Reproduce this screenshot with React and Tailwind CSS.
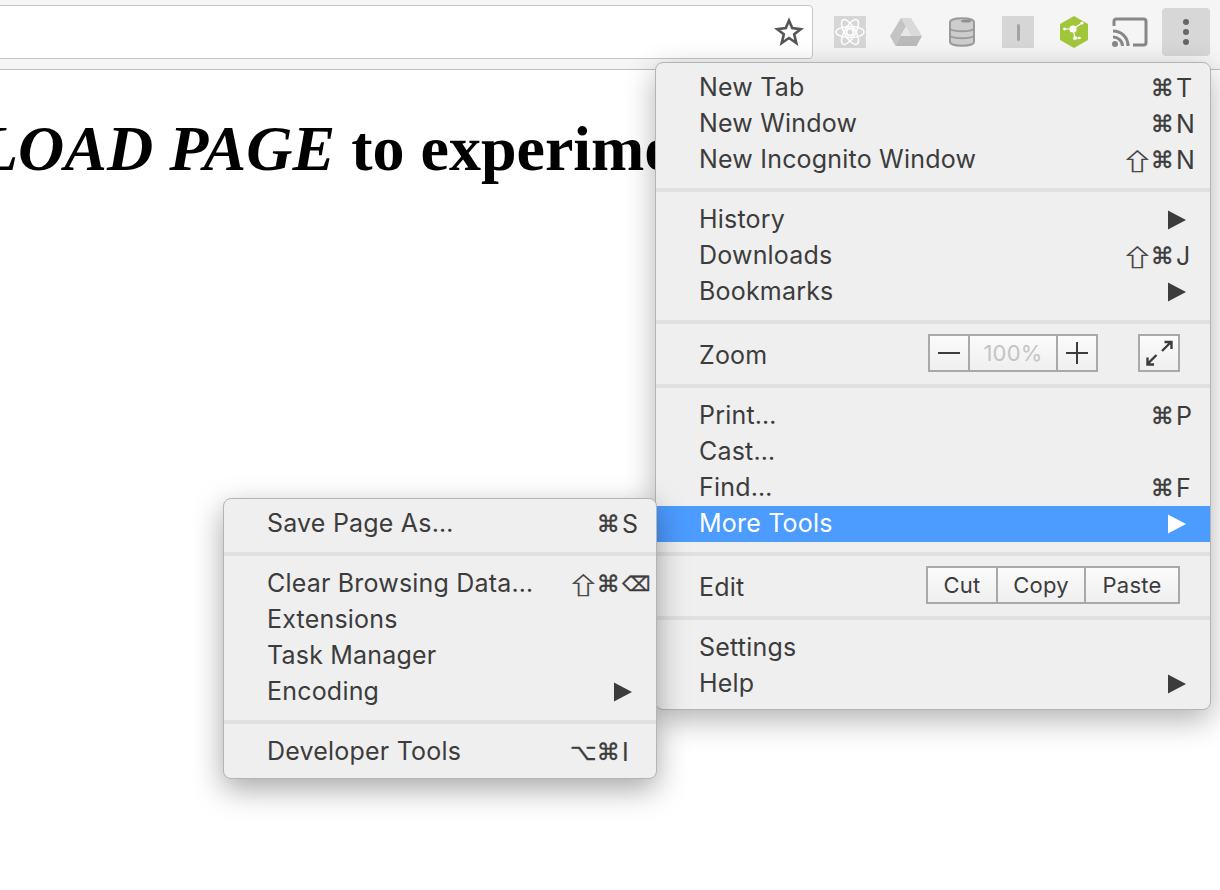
const symbolFont = "font-['DejaVu_Sans',sans-serif] [-webkit-text-stroke:0.4px_currentColor]";

function Arrow() {
  return (
    <svg width="18" height="20" viewBox="0 0 18 20" className="ml-auto mr-[24px] shrink-0">
      <path d="M0 0.5L18 10L0 19.5Z" fill="currentColor" />
    </svg>
  );
}

function Shortcut({ mods, k }) {
  return (
    <span className="ml-auto mr-[14px] flex items-center">
      {mods.split("").map((m) =>
        m === "⇧" ? (
          <span
            key={m}
            className="mr-[2px] inline-block scale-x-[1.4] font-['Noto_Sans_CJK_JP',sans-serif] text-[23px] leading-none [-webkit-text-stroke:0.3px_currentColor]"
          >
            {m}
          </span>
        ) : (
          <span key={m} className={`${symbolFont} text-[23px] leading-none`}>
            {m}
          </span>
        )
      )}
      <span className={`ml-[2px] w-[20px] text-left leading-none ${k === "⌫" ? `${symbolFont} text-[20px]` : "text-[25px]"}`}>
        {k}
      </span>
    </span>
  );
}

function Item({ label, mods, k, arrow, active }) {
  return (
    <div className={`flex h-9 items-center pl-[43px] ${active ? "bg-[#4c9bff] text-white" : ""}`}>
      <span>{label}</span>
      {k && <Shortcut mods={mods} k={k} />}
      {arrow && <Arrow />}
    </div>
  );
}

function Sep() {
  return <div className="my-[10px] h-1 bg-[#e0e0e0]" />;
}

const cell =
  "flex h-full items-center justify-center border-[#a9a9a9] bg-gradient-to-b from-[#fbfbfb] to-[#efefef]";

function StarIcon() {
  return (
    <svg width="30" height="30" viewBox="0 0 30 30" fill="none" stroke="#555" strokeWidth="2.6">
      <path d="M15 3.5L18.2 11L26.9 12.1L20.2 17.2L22.3 26.1L15 21L7.7 26.1L9.8 17.2L3.1 12.1L11.8 11Z" />
    </svg>
  );
}

function ReactIcon() {
  return (
    <svg width="32" height="32" viewBox="0 0 32 32">
      <rect width="32" height="32" fill="#d6d6d6" />
      <g fill="none" stroke="#fff" strokeWidth="1.5">
        <ellipse cx="16" cy="16" rx="14" ry="5.5" />
        <ellipse cx="16" cy="16" rx="14" ry="5.5" transform="rotate(60 16 16)" />
        <ellipse cx="16" cy="16" rx="14" ry="5.5" transform="rotate(120 16 16)" />
        <circle cx="16" cy="16" r="3.5" strokeWidth="2" />
      </g>
    </svg>
  );
}

function DriveIcon() {
  return (
    <svg width="32" height="28" viewBox="0 0 32 28">
      <path d="M11 0H21L10.5 18L5.5 28L0 18Z" fill="#c4c4c4" />
      <path d="M21 0L32 18H21L11 0Z" fill="#d9d9d9" />
      <path d="M10.5 18H32L26.5 28H5.5Z" fill="#bababa" />
      <path d="M16 9L21 18H10.5Z" fill="#e6e6e6" />
    </svg>
  );
}

function DbIcon() {
  return (
    <svg width="28" height="32" viewBox="0 0 28 32">
      <path d="M2 6C2 1 26 1 26 6V26C26 31 2 31 2 26Z" fill="#cdcdcd" stroke="#9b9b9b" strokeWidth="2" />
      <path d="M2 13C6 16 22 16 26 13M2 20C6 23 22 23 26 20" fill="none" stroke="#9b9b9b" strokeWidth="2" />
      <ellipse cx="18" cy="5" rx="5" ry="1.5" fill="#8f8f8f" />
    </svg>
  );
}

function TextIcon() {
  return (
    <div className="flex h-8 w-8 items-center justify-center bg-[#d6d6d6]">
      <div className="h-[17px] w-[3px] rounded-sm bg-[#a3a3a3]" />
    </div>
  );
}

function HexIcon() {
  return (
    <svg width="28" height="32" viewBox="0 0 28 32">
      <path d="M14 0L28 8V24L14 32L0 24V8Z" fill="#a1c63b" />
      <path d="M13 13L22 7M13 13L4 13M13 13L15 22H19" fill="none" stroke="#fff" strokeWidth="1.2" />
      <g fill="#fff">
        <circle cx="13" cy="13" r="3.6" />
        <circle cx="22" cy="7" r="1.6" />
        <circle cx="4.5" cy="13" r="1.4" />
        <circle cx="15" cy="22" r="2" />
        <circle cx="19.5" cy="22" r="1.3" />
      </g>
    </svg>
  );
}

function CastIcon() {
  return (
    <svg width="36" height="30" viewBox="0 0 36 30" fill="none" stroke="#888" strokeWidth="3">
      <path d="M2 9V4.5Q2 2 4.5 2H31.5Q34 2 34 4.5V25.5Q34 28 31.5 28H21" />
      <path d="M1 14C9 14 16 20 16 29M1 20C6 20 10.5 24 10.5 29" />
      <circle cx="3" cy="27" r="3" fill="#888" stroke="none" />
    </svg>
  );
}

const toolbarIcons = [ReactIcon, DriveIcon, DbIcon, TextIcon, HexIcon, CastIcon];

export default function App() {
  return (
    <div className="relative h-[890px] w-[1220px] overflow-hidden bg-white font-['Inter',sans-serif] text-[25px] tracking-[0.2px] text-[#3c3c3c]">
      {/* Browser toolbar */}
      <div className="flex h-[70px] items-start border-b border-[#bdbdbd] bg-[#f5f5f5] pr-[10px]">
        <div className="-ml-[10px] mt-[5px] flex h-[54px] flex-1 items-center justify-end rounded border border-[#c6c6c6] bg-white pr-[8px]">
          <StarIcon />
        </div>
        <div className="ml-[13px] mt-2 flex gap-2">
          {toolbarIcons.map((Icon, i) => (
            <div key={i} className="flex h-12 w-12 items-center justify-center">
              <Icon />
            </div>
          ))}
          <div className="flex h-12 w-12 flex-col items-center justify-center gap-[4px] rounded bg-[#d7d7d7]">
            <span className="h-[6px] w-[6px] rounded-full bg-[#666]" />
            <span className="h-[6px] w-[6px] rounded-full bg-[#666]" />
            <span className="h-[6px] w-[6px] rounded-full bg-[#666]" />
          </div>
        </div>
      </div>

      {/* Page */}
      <h1 className="-ml-[21px] mt-[39px] whitespace-nowrap font-['Liberation_Serif',serif] text-[64px] font-bold leading-[80px] tracking-normal text-black">
        <em>LOAD PAGE</em> to experiment
      </h1>

      {/* Main menu */}
      <div className="absolute left-[655px] top-[62px] w-[556px] rounded-lg border border-[#b4b4b4] bg-[#efefef] pb-[7px] pt-[7px] shadow-[0_10px_30px_rgba(0,0,0,0.3)]">
        <Item label="New Tab" mods="⌘" k="T" />
        <Item label="New Window" mods="⌘" k="N" />
        <Item label="New Incognito Window" mods="⇧⌘" k="N" />
        <Sep />
        <Item label="History" arrow />
        <Item label="Downloads" mods="⇧⌘" k="J" />
        <Item label="Bookmarks" arrow />
        <Sep />
        <div className="flex h-[40px] items-center pl-[43px] pr-[30px]">
          <span className="pt-[4px]">Zoom</span>
          <div className="ml-auto flex h-[38px] w-[170px] self-start border-2 border-[#a9a9a9] text-[22px]">
            <div className={`${cell} w-[38px]`}>
              <svg width="22" height="22" viewBox="0 0 22 22" stroke="#3c3c3c" strokeWidth="2">
                <path d="M0 11H22" />
              </svg>
            </div>
            <div className={`${cell} w-[90px] border-x-2 text-[#c4c4c4]`}>100%</div>
            <div className={`${cell} flex-1`}>
              <svg width="22" height="22" viewBox="0 0 22 22" stroke="#3c3c3c" strokeWidth="2">
                <path d="M0 11H22M11 0V22" />
              </svg>
            </div>
          </div>
          <div className={`${cell} ml-[40px] !h-[38px] w-[42px] self-start border-2`}>
            <svg width="28" height="28" viewBox="0 0 28 28" fill="none" stroke="#3c3c3c" strokeWidth="2.4">
              <path d="M17 12L26 3M19.5 3H26.5V10M11.5 16L2.5 25M2.5 18.5V25.5H9" />
            </svg>
          </div>
        </div>
        <Sep />
        <Item label="Print…" mods="⌘" k="P" />
        <Item label="Cast…" />
        <Item label="Find…" mods="⌘" k="F" />
        <Item label="More Tools" arrow active />
        <Sep />
        <div className="flex h-[40px] items-center pl-[43px] pr-[30px]">
          <span className="pt-[4px]">Edit</span>
          <div className="ml-auto flex h-[38px] w-[254px] self-start border-2 border-[#a9a9a9] text-[22px]">
            <div className={`${cell} w-[68px]`}>Cut</div>
            <div className={`${cell} w-[90px] border-x-2`}>Copy</div>
            <div className={`${cell} flex-1`}>Paste</div>
          </div>
        </div>
        <Sep />
        <Item label="Settings" />
        <Item label="Help" arrow />
      </div>

      {/* More Tools submenu */}
      <div className="absolute left-[223px] top-[498px] w-[434px] rounded-lg border border-[#b4b4b4] bg-[#efefef] pb-2 pt-[7px] shadow-[0_10px_30px_rgba(0,0,0,0.35)]">
        <Item label="Save Page As…" mods="⌘" k="S" />
        <Sep />
        <Item label="Clear Browsing Data…" mods="⇧⌘" k="⌫" />
        <Item label="Extensions" />
        <Item label="Task Manager" />
        <Item label="Encoding" arrow />
        <Sep />
        <Item label="Developer Tools" mods="⌥⌘" k="I" />
      </div>
    </div>
  );
}
